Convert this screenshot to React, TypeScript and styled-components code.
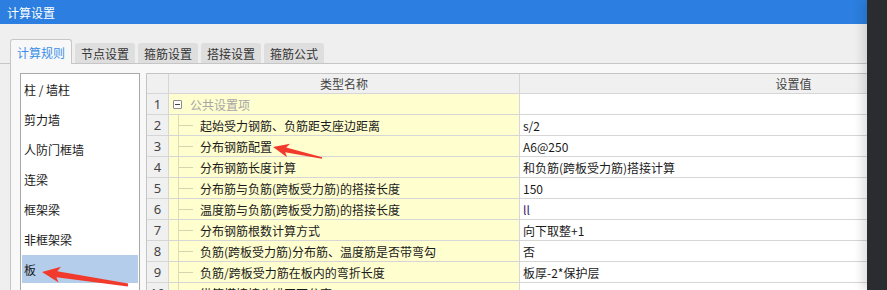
import React, { ReactElement } from 'react'
import styled, { createGlobalStyle } from 'styled-components'

const GlobalStyle = createGlobalStyle`
  html, body {
    margin: 0;
    padding: 0;
    background: #efefef;
  }
  body {
    font-family: 'Noto Sans CJK SC', 'Microsoft YaHei', sans-serif;
    font-size: 12px;
    color: #1a1a1a;
  }
  * {
    box-sizing: border-box;
  }
`

const Screen = styled.div`
  display: flex;
  width: 887px;
  height: 290px;
  overflow: hidden;
`

const Window = styled.div`
  position: relative;
  flex: 1;
  min-width: 0;
  display: flex;
  flex-direction: column;
  background: #efefef;
  overflow: hidden;
`

const DarkSide = styled.div`
  position: relative;
  z-index: 2;
  width: 20px;
  flex: none;
  background: #2b2c2f;
  box-shadow: -5px 0 10px rgba(0, 0, 0, 0.12);
`

const TitleBar = styled.div`
  height: 24px;
  flex: none;
  display: flex;
  align-items: center;
  padding-left: 7px;
  background: #2c7fe0;
  color: #fff;
  font-size: 12px;
`

const TabBar = styled.div`
  height: 40px;
  flex: none;
  display: flex;
  align-items: flex-end;
  gap: 3px;
  padding-left: 10px;
  border-bottom: 1px solid #c6c6c6;
`

const Tab = styled.div<{ $active?: boolean }>`
  position: relative;
  height: ${p => (p.$active ? 25 : 20)}px;
  margin-bottom: ${p => (p.$active ? -1 : 0)}px;
  padding: 0 6px;
  display: flex;
  align-items: center;
  border-radius: 3px 3px 0 0;
  background: ${p => (p.$active ? '#f8f8f8' : '#dedede')};
  border: ${p => (p.$active ? '1px solid #c6c6c6' : 'none')};
  border-bottom: none;
  color: ${p => (p.$active ? '#3b8fe8' : '#333')};
  font-size: 12px;
  white-space: nowrap;
`

const Panel = styled.div`
  flex: 1;
  display: flex;
  gap: 6px;
  margin-left: 10px;
  padding: 9px 0 0 9px;
  background: #f8f8f8;
  border-left: 1px solid #c6c6c6;
  min-height: 0;
`

const SideList = styled.div`
  width: 120px;
  flex: none;
  padding: 1px;
  background: #fff;
  border: 1px solid #a8a8a8;
  border-bottom: none;
`

const SideItem = styled.div<{ $selected?: boolean }>`
  height: 28px;
  margin-bottom: 2px;
  padding-left: 2px;
  display: flex;
  align-items: center;
  background: ${p => (p.$selected ? '#b4cdea' : 'transparent')};
  color: #1a1a1a;
  font-size: 12px;
`

const Grid = styled.div`
  width: 922px;
  flex: none;
  display: flex;
  flex-direction: column;
  background: #fff;
  border-left: 1px solid #c4c4c4;
  border-top: 1px solid #c4c4c4;
  overflow: hidden;
`

const Row = styled.div<{ $header?: boolean }>`
  flex: none;
  display: grid;
  grid-template-columns: 22px 351px 548px;
  height: ${p => (p.$header ? 20 : 21)}px;
  border-bottom: 1px solid #d6d6d6;
`

const NumCell = styled.div`
  display: flex;
  align-items: center;
  justify-content: center;
  background: #f0f0f0;
  border-right: 1px solid #d6d6d6;
  color: #444;
  font-family: 'Noto Sans', 'Noto Sans CJK SC', sans-serif;
  font-size: 13px;
`

const HeadCell = styled.div`
  display: flex;
  align-items: center;
  justify-content: center;
  background: #f0f0f0;
  border-right: 1px solid #d6d6d6;
  color: #444;
  font-size: 12px;
`

const NameCell = styled.div`
  display: flex;
  align-items: stretch;
  background: #fffecf;
  border-right: 1px solid #d6d6d6;
  white-space: nowrap;
  overflow: hidden;
`

const ValueCell = styled.div<{ $tone?: string }>`
  display: flex;
  align-items: center;
  padding-left: 3px;
  border-right: 1px solid #d6d6d6;
  color: ${p => p.$tone || '#1a1a1a'};
  font-size: 12px;
  white-space: nowrap;
`

const Branch = styled.div`
  width: 15px;
  flex: none;
  margin-left: 9px;
  border-left: 1px solid #dcdcb8;
  background: linear-gradient(#d4d4b0, #d4d4b0) no-repeat left center / 14px 1px;
`

const Label = styled.div<{ $muted?: boolean }>`
  display: flex;
  align-items: center;
  margin-left: ${p => (p.$muted ? 8 : 7)}px;
  color: ${p => (p.$muted ? '#a6a6a6' : '#1a1a1a')};
  font-size: 12px;
`

const Collapse = styled.div`
  align-self: center;
  width: 9px;
  height: 9px;
  flex: none;
  margin-left: 4px;
  display: flex;
  align-items: center;
  justify-content: center;
  border: 1px solid #8c8c8c;
  border-radius: 1px;
  background: #fff;

  &::after {
    content: '';
    width: 5px;
    height: 1px;
    background: #444;
  }
`

const Overlay = styled.svg`
  position: absolute;
  left: 0;
  top: 0;
  pointer-events: none;
`

const tabs = ['计算规则', '节点设置', '箍筋设置', '搭接设置', '箍筋公式']
const sideItems = ['柱 / 墙柱', '剪力墙', '人防门框墙', '连梁', '框架梁', '非框架梁', '板']

type Setting = { name: string; value: string; tone?: string }

const settings: Setting[] = [
  { name: '起始受力钢筋、负筋距支座边距离', value: 's/2' },
  { name: '分布钢筋配置', value: 'A6@250' },
  { name: '分布钢筋长度计算', value: '和负筋(跨板受力筋)搭接计算' },
  { name: '分布筋与负筋(跨板受力筋)的搭接长度', value: '150' },
  { name: '温度筋与负筋(跨板受力筋)的搭接长度', value: 'll', tone: '#3a1f70' },
  { name: '分布钢筋根数计算方式', value: '向下取整+1' },
  { name: '负筋(跨板受力筋)分布筋、温度筋是否带弯勾', value: '否' },
  { name: '负筋/跨板受力筋在板内的弯折长度', value: '板厚-2*保护层' },
  { name: '纵筋搭接接头错开百分率', value: '50%' },
]

// tapered screenshot-style arrows
const arrows = [
  '273,147 287.1,157.3 285.2,152.3 321.8,158.8 322.2,157.2 286.2,147.4 290.1,143.7',
  '42,272 58.6,282.6 56.4,277.2 127.8,286.6 128.2,283.4 57.3,271.2 61,266.8',
]

const App = (): ReactElement => {
  return (
    <>
      <GlobalStyle />
      <Screen>
        <Window>
          <TitleBar>计算设置</TitleBar>
          <TabBar>
            {tabs.map((t, i) => (
              <Tab key={t} $active={i === 0}>
                {t}
              </Tab>
            ))}
          </TabBar>
          <Panel>
            <SideList>
              {sideItems.map(item => (
                <SideItem key={item} $selected={item === '板'}>
                  {item}
                </SideItem>
              ))}
            </SideList>
            <Grid>
              <Row $header>
                <HeadCell />
                <HeadCell>类型名称</HeadCell>
                <HeadCell>设置值</HeadCell>
              </Row>
              <Row>
                <NumCell>1</NumCell>
                <NameCell>
                  <Collapse />
                  <Label $muted>公共设置项</Label>
                </NameCell>
                <ValueCell />
              </Row>
              {settings.map((s, i) => (
                <Row key={s.name}>
                  <NumCell>{i + 2}</NumCell>
                  <NameCell>
                    <Branch />
                    <Label>{s.name}</Label>
                  </NameCell>
                  <ValueCell $tone={s.tone}>{s.value}</ValueCell>
                </Row>
              ))}
            </Grid>
          </Panel>
          <Overlay width={867} height={290} viewBox='0 0 867 290'>
            {arrows.map(points => (
              <polygon key={points} points={points} fill='#f23a2c' />
            ))}
          </Overlay>
        </Window>
        <DarkSide />
      </Screen>
    </>
  )
}

export default App
